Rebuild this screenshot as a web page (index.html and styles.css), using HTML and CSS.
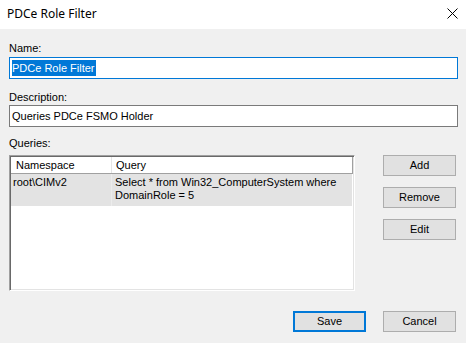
FILE: index.html
```html
<!doctype html>
<html lang="en">
<head>
	<meta charset="UTF-8" />
	<title>PDCe Role Filter</title>
	<link rel="stylesheet" href="styles.css">
</head>
<body>
	<!--标题栏-->
	<div class="titlebar">
		<span class="title">PDCe Role Filter</span>
		<svg class="close" width="11" height="11" viewBox="0 0 11 11">
			<path d="M0.5 0.5 L10.5 10.5 M10.5 0.5 L0.5 10.5" stroke="#000" stroke-width="1" fill="none"/>
		</svg>
	</div>

	<div class="dialog">
		<div class="label">Name:</div>
		<div class="textbox focus"><span class="sel">PDCe Role Filter</span></div>

		<div class="label label-desc">Description:</div>
		<div class="textbox">Queries PDCe FSMO Holder</div>

		<div class="label label-queries">Queries:</div>
		<div class="queries">
			<!--列表-->
			<div class="listbox">
				<div class="lv-head">
					<div class="col-ns">Namespace</div>
					<div class="col-q">Query</div>
				</div>
				<div class="lv-row">
					<div class="col-ns">root\CIMv2</div>
					<div class="col-q">Select * from Win32_ComputerSystem where<br>DomainRole = 5</div>
				</div>
			</div>
			<!--按钮-->
			<div class="side">
				<div class="btn">Add</div>
				<div class="btn">Remove</div>
				<div class="btn">Edit</div>
			</div>
		</div>

		<div class="footer">
			<div class="btn default">Save</div>
			<div class="btn">Cancel</div>
		</div>
	</div>
</body>
</html>
```

FILE: styles.css
```css
* {
    padding: 0;
    margin: 0;
    box-sizing: border-box;
}

body {
    width: 466px;
    height: 343px;
    background: #f0f0f0;
    font-family: "Liberation Sans", Arial, sans-serif;
    font-size: 11px;
    line-height: 13px;
    color: #000;
    overflow: hidden;
}

.titlebar {
    height: 29px;
    background: #fff;
    display: flex;
    align-items: center;
    justify-content: space-between;
    padding: 0 8px 0 7px;
}

.title {
    font-family: "Noto Sans", sans-serif;
    font-size: 12px;
    line-height: 16px;
    margin-top: -1px;
}

.close {
    margin-top: -3px;
}

.dialog {
    padding: 13px 8px 0 9px;
}

.label {
    height: 13px;
    margin-bottom: 2px;
}

.label-desc {
    margin-top: 12px;
    margin-bottom: 1px;
}

.label-queries {
    margin-top: 10px;
    margin-bottom: 5px;
}

.textbox {
    height: 22px;
    background: #fff;
    border: 1px solid #7a7a7a;
    padding: 0 2px;
    display: flex;
    align-items: center;
    white-space: nowrap;
}

.textbox.focus {
    border-color: #0078d7;
}

.sel {
    background: #0078d7;
    color: #fff;
    line-height: 16px;
    padding-right: 1px;
}

.queries {
    display: flex;
    gap: 28px;
}

.listbox {
    width: 346px;
    height: 136px;
    background: #fff;
    border-top: 1px solid #a0a0a0;
    border-left: 1px solid #a0a0a0;
    border-right: 1px solid #fff;
    border-bottom: 1px solid #fff;
    box-shadow: inset 1px 1px 0 #696969, inset -1px -1px 0 #e3e3e3;
    padding: 1px 1px 1px 1px;
}

.lv-head {
    display: flex;
    height: 17px;
    border-bottom: 1px solid #a0a0a0;
    border-right: 1px solid #a0a0a0;
}

.lv-head .col-ns {
    width: 101px;
    padding-left: 5px;
    border-right: 1px solid #e5e5e5;
    line-height: 16px;
}

.lv-head .col-q {
    padding-left: 4px;
    line-height: 16px;
}

.lv-row {
    display: flex;
    height: 32px;
    background: #e3e3e3;
    margin-right: 1px;
    padding-top: 2px;
}

.lv-row .col-ns {
    width: 101px;
    padding-left: 2px;
    border-right: 1px solid #ececec;
    margin-top: -2px;
    padding-top: 2px;
}

.lv-row .col-q {
    padding-left: 3px;
}

.side {
    display: flex;
    flex-direction: column;
    gap: 11px;
}

.btn {
    width: 73px;
    height: 21px;
    background: #e1e1e1;
    border: 1px solid #adadad;
    display: flex;
    align-items: center;
    justify-content: center;
}

.btn.default {
    border: 2px solid #0078d7;
}

.footer {
    display: flex;
    justify-content: flex-end;
    gap: 17px;
    margin-top: 20px;
    padding-right: 2px;
}
```
